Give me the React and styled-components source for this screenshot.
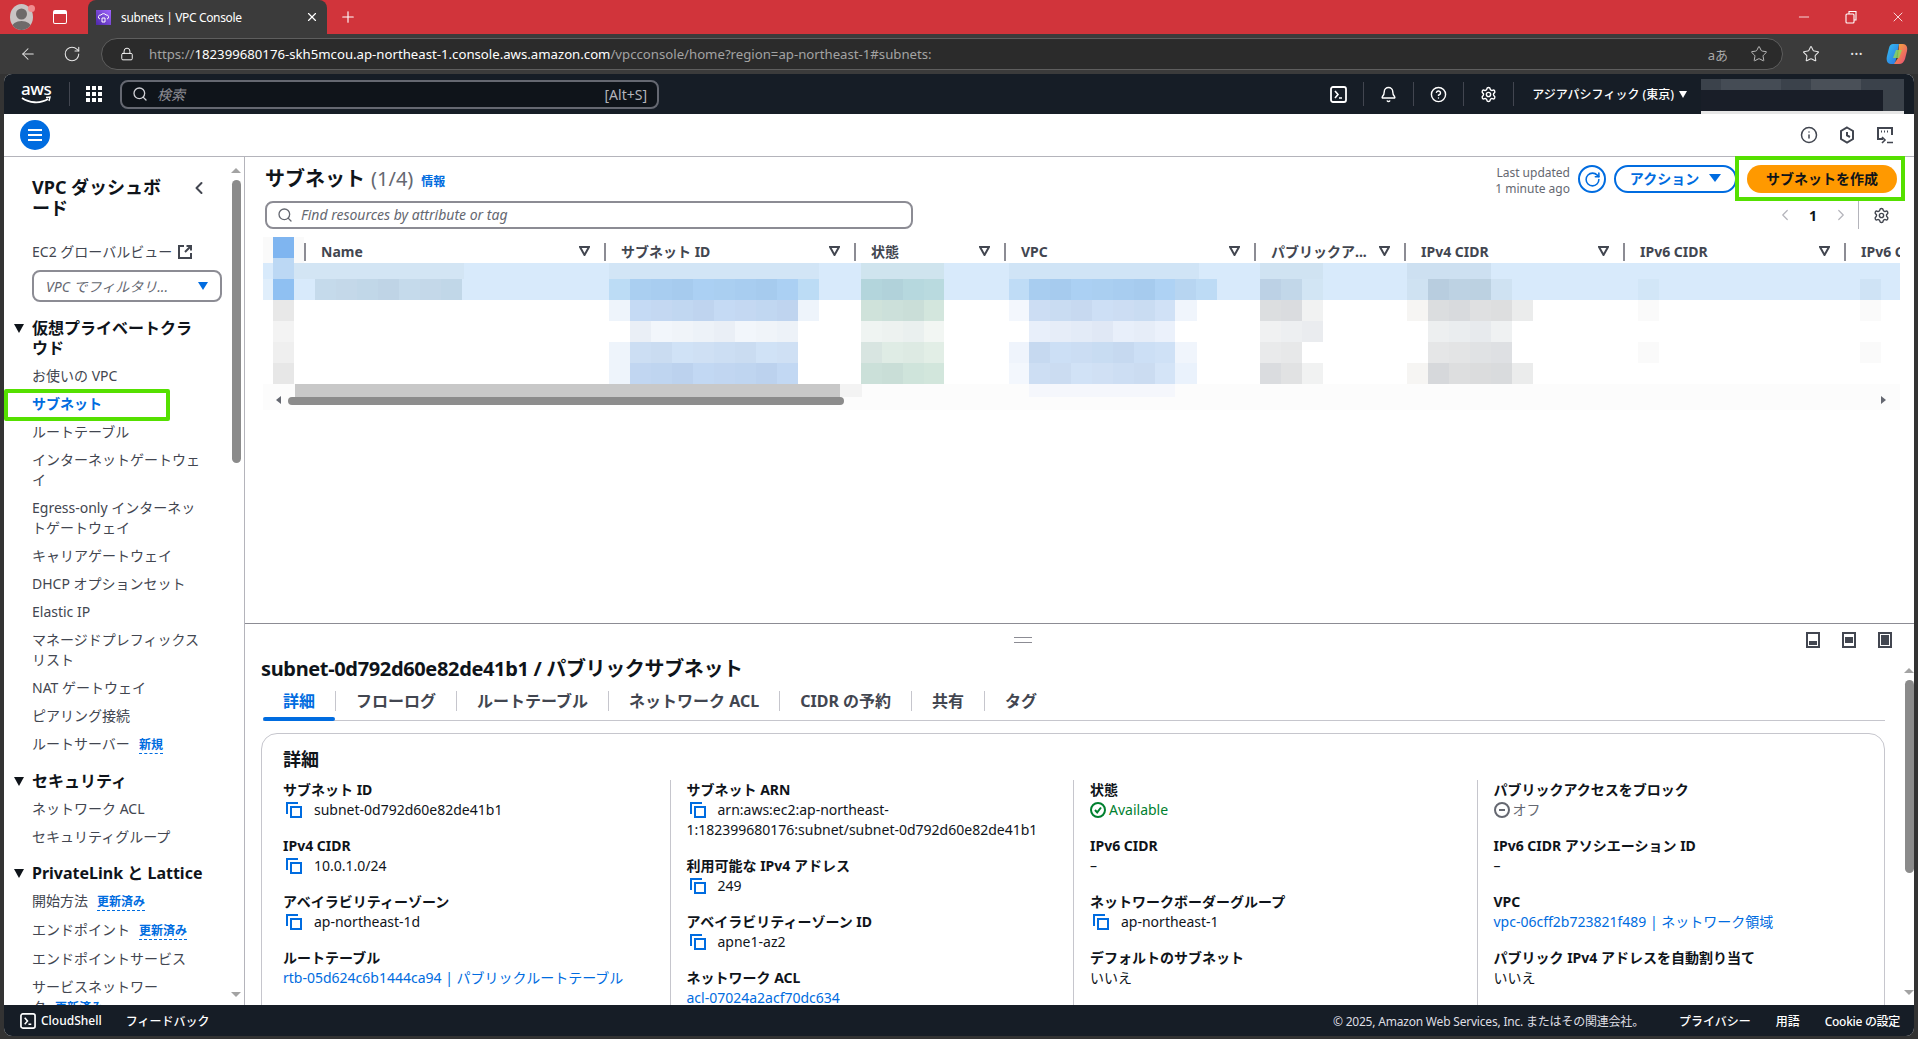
import styled, { createGlobalStyle } from "styled-components";
import { ArrowLeft, Bell, ChevronLeft, ChevronRight, CircleHelp, Info, Lock, Minus, Plus, RotateCw, Search, Settings, Star, X } from "lucide-react";

const sans = `"Noto Sans", "Noto Sans CJK JP", sans-serif`;
const blue = "#006ce0";
const ink = "#0f141a";
const gray = "#656871";
const navBg = "#161d26";

const GlobalStyle = createGlobalStyle`
  html, body { margin: 0; padding: 0; height: 100%; overflow: hidden; }
  body { font-family: ${sans}; background: #333; color: ${ink}; }
  * { box-sizing: border-box; }
`;

const Screen = styled.div`
  width: 1918px;
  height: 1039px;
  display: flex;
  flex-direction: column;
`;

/* browser chrome */
const TitleBar = styled.div`
  height: 34px;
  flex: none;
  background: #d1343b;
  display: flex;
  align-items: center;
  color: #fff;
  padding-left: 10px;
`;
const Avatar = styled.div`
  position: relative;
  width: 23px;
  height: 26px;
  border-radius: 50%;
  background: #c9c4c4;
  overflow: hidden;
  flex: none;
`;
const AvatarDot = styled.span`
  position: absolute;
  left: 18px;
  top: 1px;
  width: 7px;
  height: 7px;
  border-radius: 50%;
  background: #f08d90;
`;
const AvatarWrap = styled.div`
  position: relative;
  flex: none;
  width: 23px;
  height: 26px;
`;
const TabStrip = styled.div`
  width: 14px;
  height: 14px;
  margin-left: 20px;
  border: 1.5px solid #fff;
  border-top-width: 4px;
  border-radius: 2px;
  flex: none;
`;
const BrowserTab = styled.div`
  margin-left: 21px;
  width: 239px;
  height: 34px;
  background: #3b3b3b;
  border-radius: 8px 8px 0 0;
  display: flex;
  align-items: center;
  padding: 0 8px;
  font-size: 12px;
  flex: none;
`;
const TabTitle = styled.span`
  margin-left: 10px;
  flex: 1;
  letter-spacing: -0.35px;
`;
const NewTab = styled.div`
  margin-left: 12px;
  display: flex;
`;
const WindowButtons = styled.div`
  margin-left: auto;
  display: flex;
  gap: 31px;
  padding-right: 12px;
`;
const AddressBar = styled.div`
  height: 40px;
  flex: none;
  background: #3b3b3b;
  display: flex;
  align-items: center;
  color: #e6e6e6;
  padding-left: 19px;
`;
const ReloadBox = styled.div`
  margin-left: 26px;
  display: flex;
`;
const UrlPill = styled.div`
  margin-left: 20px;
  width: 1682px;
  height: 32px;
  flex: none;
  background: #2b2b2b;
  border: 1px solid #5e5e5e;
  border-radius: 16px;
  display: flex;
  align-items: center;
  padding: 0 14px 0 18px;
  font-size: 13.2px;
`;
const UrlText = styled.span`
  margin-left: 15px;
  color: #a3a3a3;
  white-space: nowrap;
  flex: 1;
  & b { font-weight: 400; color: #fff; }
`;
const ReadAloud = styled.span`
  color: #a9a9a9;
  font-size: 13px;
  margin-right: 22px;
`;
const BrowserTools = styled.div`
  display: flex;
  align-items: center;
  gap: 30px;
  margin-left: 19px;
`;
const MoreDots = styled.span`
  margin-right: -8px;
`;

/* page frame */
const PageFrame = styled.div`
  flex: 1;
  min-height: 0;
  margin: 0 4px 3px;
  background: #fff;
  border-radius: 8px;
  overflow: hidden;
  display: flex;
  flex-direction: column;
`;

/* aws top nav */
const TopNav = styled.div`
  height: 40px;
  flex: none;
  background: ${navBg};
  display: flex;
  align-items: center;
  color: #fff;
  position: relative;
`;
const LogoBox = styled.div`
  width: 51px;
  height: 24px;
  margin-left: 15px;
  border-right: 1px solid #424650;
  flex: none;
`;
const GridBox = styled.div`
  margin-left: 16px;
  display: grid;
  grid-template-columns: repeat(3, 4px);
  gap: 2px;
  flex: none;
`;
const GridDot = styled.span`
  width: 4px;
  height: 4px;
  background: #fff;
`;
const TopSearch = styled.div`
  margin-left: 18px;
  width: 539px;
  height: 29px;
  flex: none;
  background: #0f141a;
  border: 2px solid #656871;
  border-radius: 8px;
  display: flex;
  align-items: center;
  padding: 0 10px;
  color: #b4b4bb;
  font-size: 14px;
`;
const TopSearchHint = styled.span`
  margin-left: 9px;
  font-style: italic;
  color: #8c8c94;
  flex: 1;
`;
const ShortCut = styled.span`
  font-size: 14px;
  color: #b4b4bb;
`;
const NavTools = styled.div`
  margin-left: auto;
  display: flex;
  align-items: center;
  padding-right: 227px;
`;
const NavTool = styled.div`
  width: 50px;
  height: 24px;
  display: flex;
  align-items: center;
  justify-content: center;
  border-right: 1px solid #424650;
`;
const RegionLabel = styled.div`
  margin-left: 18px;
  font-size: 12px;
  font-weight: 500;
  white-space: nowrap;
  display: flex;
  align-items: center;
  gap: 5px;
`;
const DownMark = styled.span`
  width: 0;
  height: 0;
  border-left: ${(p) => p.$size}px solid transparent;
  border-right: ${(p) => p.$size}px solid transparent;
  border-top: ${(p) => p.$h}px solid ${(p) => p.$color};
  flex: none;
`;
const AccountMosaic = styled.svg`
  position: absolute;
  right: 10px;
  top: 5px;
`;

/* bar under nav */
const SubBar = styled.div`
  height: 43px;
  flex: none;
  border-bottom: 1px solid #b4b4bb;
  display: flex;
  align-items: center;
  padding: 0 20px 0 16px;
`;
const MenuButton = styled.div`
  width: 30px;
  height: 30px;
  border-radius: 50%;
  background: ${blue};
  display: flex;
  flex-direction: column;
  align-items: center;
  justify-content: center;
  gap: 3px;
`;
const MenuLine = styled.span`
  width: 14px;
  height: 2px;
  background: #fff;
`;
const SubTools = styled.div`
  margin-left: auto;
  display: flex;
  align-items: center;
  gap: 20px;
  color: #424650;
`;

const Body = styled.div`
  flex: 1;
  min-height: 0;
  display: flex;
`;

/* left navigation */
const Sidebar = styled.div`
  position: relative;
  width: 241px;
  flex: none;
  border-right: 1px solid #b4b4bb;
  overflow: hidden;
  padding: 20px 0 0 28px;
`;
const SideTitle = styled.div`
  width: 140px;
  font-size: 18px;
  font-weight: 700;
  line-height: 21px;
`;
const CollapseIcon = styled.div`
  position: absolute;
  left: 185px;
  top: 21px;
  color: #424650;
  display: flex;
`;
const NavText = styled.div`
  position: relative;
  width: 172px;
  font-size: 14px;
  line-height: 20px;
  padding: 4px 0;
  white-space: pre-line;
  color: ${(p) => (p.$active ? blue : "#424650")};
  font-weight: ${(p) => (p.$active ? 700 : 400)};
`;
const GlobalLink = styled(NavText)`
  margin-top: 19px;
  display: flex;
  align-items: center;
  gap: 6px;
  white-space: nowrap;
`;
const Filter = styled.div`
  margin-top: 4px;
  width: 190px;
  height: 32px;
  border: 2px solid #8c8c94;
  border-radius: 8px;
  display: flex;
  align-items: center;
  justify-content: space-between;
  padding: 0 12px;
  font-size: 14px;
  font-style: italic;
  color: ${gray};
  white-space: nowrap;
`;
const NavGroupTitle = styled.div`
  position: relative;
  width: 172px;
  margin-top: ${(p) => p.$top}px;
  margin-bottom: 4px;
  font-size: 16px;
  font-weight: 700;
  line-height: 20px;
`;
const GroupArrow = styled.span`
  position: absolute;
  left: -18px;
  top: 6px;
  display: flex;
`;
const NewBadge = styled.span`
  margin-left: 9px;
  font-size: 12px;
  font-weight: 700;
  color: ${blue};
  border-bottom: 1px dashed ${blue};
`;
const Highlight = styled.div`
  position: absolute;
  left: -28px;
  top: -1px;
  width: 166px;
  height: 32px;
  border: 4px solid #55e000;
  border-radius: 2px;
  pointer-events: none;
`;
const ScrollTrack = styled.div`
  position: absolute;
  right: ${(p) => p.$right}px;
  top: ${(p) => p.$top}px;
  width: 9px;
  height: ${(p) => p.$height}px;
  border-radius: 5px;
  background: #8b8b8b;
`;
const ScrollArrow = styled.div`
  position: absolute;
  right: ${(p) => p.$right}px;
  top: ${(p) => p.$top}px;
  width: 0;
  height: 0;
  border-left: 5px solid transparent;
  border-right: 5px solid transparent;
  ${(p) => (p.$up ? "border-bottom: 5px solid #a3a3a3;" : "border-top: 5px solid #a3a3a3;")}
`;

/* main */
const Main = styled.div`
  flex: 1;
  min-width: 0;
  display: flex;
  flex-direction: column;
`;
const ListPanel = styled.div`
  position: relative;
  height: 466px;
  flex: none;
  padding: 8px 0 0 20px;
`;
const ListHead = styled.div`
  height: 28px;
  display: flex;
  align-items: center;
  padding-right: 17px;
`;
const PageTitle = styled.h1`
  margin: 0;
  font-size: 20px;
  font-weight: 700;
  line-height: 28px;
  white-space: nowrap;
`;
const TitleCount = styled.span`
  font-weight: 400;
  color: ${gray};
  margin-left: 6px;
`;
const InfoLink = styled.a`
  margin-left: 8px;
  margin-top: 4px;
  font-size: 12px;
  font-weight: 700;
  color: ${blue};
`;
const LastUpdated = styled.div`
  margin-left: auto;
  margin-top: 4px;
  font-size: 12px;
  line-height: 16px;
  color: ${gray};
  text-align: right;
  white-space: nowrap;
`;
const RefreshButton = styled.div`
  margin-left: 8px;
  width: 28px;
  height: 28px;
  border-radius: 50%;
  border: 2px solid ${blue};
  color: ${blue};
  display: flex;
  align-items: center;
  justify-content: center;
`;
const ActionsButton = styled.div`
  margin-left: 8px;
  width: 123px;
  height: 28px;
  padding-bottom: 2px;
  border-radius: 20px;
  border: 2px solid ${blue};
  color: ${blue};
  font-size: 14px;
  font-weight: 700;
  display: flex;
  align-items: center;
  justify-content: center;
  gap: 10px;
`;
const CreateWrap = styled.div`
  position: relative;
  margin-left: 10px;
`;
const CreateButton = styled.div`
  width: 150px;
  height: 28px;
  padding-bottom: 2px;
  border-radius: 20px;
  background: #ff9900;
  font-size: 14px;
  font-weight: 700;
  display: flex;
  align-items: center;
  justify-content: center;
`;
const CreateHighlight = styled.div`
  position: absolute;
  left: -12px;
  top: -9px;
  width: 170px;
  height: 45px;
  border: 4px solid #55e000;
  pointer-events: none;
`;
const SearchRow = styled.div`
  margin-top: 8px;
  height: 28px;
  display: flex;
  align-items: center;
  padding-right: 24px;
`;
const ListSearch = styled.div`
  width: 648px;
  height: 28px;
  border: 2px solid #8c8c94;
  border-radius: 8px;
  display: flex;
  align-items: center;
  padding: 0 10px 1px;
  color: ${gray};
`;
const ListSearchHint = styled.span`
  margin-left: 8px;
  font-size: 14px;
  font-style: italic;
  color: ${gray};
`;
const Pager = styled.div`
  margin-left: auto;
  display: flex;
  align-items: center;
  color: #b4b4bb;
`;
const PageNumber = styled.span`
  width: 38px;
  text-align: center;
  font-size: 14px;
  font-weight: 700;
  color: ${ink};
`;
const PagerSettings = styled.div`
  margin-left: 8px;
  padding-left: 14px;
  height: 28px;
  border-left: 1px solid #b4b4bb;
  color: #424650;
  display: flex;
  align-items: center;
`;
const TableWrap = styled.div`
  position: relative;
  margin: 8px 0 0 -2px;
  width: 1637px;
  overflow: hidden;
`;
const HeadRow = styled.div`
  display: flex;
  height: 26px;
  padding-top: 6px;
`;
const HeadCell = styled.div`
  width: ${(p) => p.$width}px;
  flex: none;
  height: 18px;
  padding: 0 14px 2px 15px;
  border-left: ${(p) => (p.$plain ? "none" : "2px solid #8c8c94")};
  display: flex;
  align-items: center;
  justify-content: space-between;
  font-size: 14px;
  font-weight: 700;
  color: #424650;
  white-space: nowrap;
  overflow: hidden;
`;
const FilterMark = styled.svg`
  flex: none;
`;
const TableRow = styled.div`
  height: ${(p) => p.$height}px;
  background: ${(p) => (p.$selected ? "#d8eafb" : "#fff")};
`;
const MosaicLayer = styled.svg`
  position: absolute;
  left: 0;
  top: 0;
`;
const HScroll = styled.div`
  position: absolute;
  left: 25px;
  top: 160px;
  width: 556px;
  height: 8px;
  border-radius: 4px;
  background: #8b8b8b;
`;

/* split panel */
const SplitPanel = styled.div`
  position: relative;
  flex: 1;
  min-height: 0;
  border-top: 1px solid #8c8c94;
  overflow: hidden;
`;
const SplitTools = styled.div`
  height: 32px;
  display: flex;
  align-items: center;
  padding-right: 22px;
`;
const Handle = styled.div`
  margin-left: 769px;
  width: 18px;
  height: 6px;
  border-top: 1px solid #8c8c94;
  border-bottom: 1px solid #8c8c94;
`;
const LayoutIcons = styled.div`
  margin-left: auto;
  display: flex;
  gap: 22px;
`;
const SplitTitle = styled.h2`
  margin: 0 0 0 16px;
  font-size: 20px;
  font-weight: 700;
  line-height: 26px;
  white-space: nowrap;
  letter-spacing: -0.35px;
`;
const Tabs = styled.div`
  position: relative;
  margin: 9px 29px 0 18px;
  display: flex;
  padding-bottom: 9px;
  border-bottom: 1px solid #c6c6cd;
`;
const Tab = styled.div`
  position: relative;
  padding: 0 20px;
  font-size: 16px;
  font-weight: 700;
  line-height: 20px;
  white-space: nowrap;
  color: ${(p) => (p.$active ? blue : "#424650")};
  border-right: ${(p) => (p.$last ? "none" : "1px solid #c6c6cd")};
`;
const TabUnderline = styled.span`
  position: absolute;
  left: 0;
  right: 0;
  bottom: -10px;
  height: 4px;
  border-radius: 2px;
  background: ${blue};
`;
const Card = styled.div`
  margin: 12px 29px 0 16px;
  height: 340px;
  border: 1px solid #c6c6cd;
  border-radius: 16px;
  padding: 13px 0 0 4px;
`;
const CardTitle = styled.h3`
  margin: 0 0 0 17px;
  font-size: 18px;
  font-weight: 700;
  line-height: 24px;
`;
const DetailGrid = styled.div`
  margin-top: 9px;
  display: grid;
  grid-template-columns: repeat(4, 403.5px);
`;
const DetailColumn = styled.div`
  padding-left: 16px;
  height: 260px;
  border-left: ${(p) => (p.$first ? "1px solid transparent" : "1px solid #c6c6cd")};
`;
const Field = styled.div`
  margin-bottom: 16px;
  font-size: 14px;
  line-height: 20px;
`;
const FieldLabel = styled.div`
  font-weight: 700;
`;
const FieldValue = styled.div`
  color: ${(p) => p.$color || ink};
  width: 372px;
`;
const CopyMark = styled.svg`
  margin: 0 12px 0 3px;
  vertical-align: -3px;
`;
const StatusMark = styled.svg`
  margin-right: 3px;
  vertical-align: -3px;
`;
const LinkText = styled.a`
  color: ${blue};
`;

/* footer */
const Footer = styled.div`
  height: 31px;
  flex: none;
  background: ${navBg};
  display: flex;
  align-items: center;
  padding: 0 14px 0 16px;
  color: #fff;
  font-size: 12px;
`;
const FooterShell = styled.div`
  display: flex;
  align-items: center;
  gap: 5px;
  font-weight: 500;
`;
const FooterLink = styled.span`
  margin-left: ${(p) => p.$left}px;
  font-weight: 500;
  white-space: nowrap;
  letter-spacing: ${(p) => p.$tight || 0}px;
`;
const Copyright = styled.span`
  margin-left: auto;
  color: #dedee3;
  white-space: nowrap;
  letter-spacing: -0.2px;
`;

const AwsLogo = () => (
  <svg width="34" height="24" viewBox="0 0 34 24">
    <text x="2" y="13" fill="#fff" fontFamily={sans} fontSize="17" fontWeight="500" letterSpacing="-0.5">aws</text>
    <path d="M3 16c7 5 18 6 26 1" fill="none" stroke="#fff" strokeWidth="1.8" />
    <path d="M27 15.5l4 -.5 -1 4" fill="none" stroke="#fff" strokeWidth="1.4" />
  </svg>
);

const Favicon = () => (
  <svg width="15" height="15" viewBox="0 0 15 15">
    <defs>
      <linearGradient id="fav" x1="0" y1="1" x2="1" y2="0">
        <stop offset="0" stopColor="#4d27a8" />
        <stop offset="1" stopColor="#a166ff" />
      </linearGradient>
    </defs>
    <rect width="15" height="15" fill="url(#fav)" />
    <path d="M4 9a2 2 0 0 1 1-4 3 3 0 0 1 5 0 2 2 0 0 1 1 4M6 8h3v4H6z" fill="none" stroke="#fff" strokeWidth="1" />
  </svg>
);

const Copilot = () => (
  <svg width="24" height="24" viewBox="0 0 24 24">
    <defs>
      <linearGradient id="cpA" x1="0" y1="0" x2="1" y2="1">
        <stop offset="0" stopColor="#35c1f1" />
        <stop offset="1" stopColor="#2b6fe0" />
      </linearGradient>
      <linearGradient id="cpB" x1="0" y1="0" x2="1" y2="1">
        <stop offset="0" stopColor="#f7b733" />
        <stop offset="1" stopColor="#e8447a" />
      </linearGradient>
    </defs>
    <path d="M8 2h6l-4 20H6C2 22 1 18 2 14L4 6c.6-2.6 2-4 4-4z" fill="url(#cpA)" />
    <path d="M14 2h4c3 0 5 3 4 7l-2 8c-1 3-3 5-6 5h-5l4-6z" fill="url(#cpB)" />
    <path d="M11 8h6l-3 8H8z" fill="#8ed85a" opacity=".8" />
  </svg>
);

const ShellIcon = ({ size = 17 }) => (
  <svg width={size} height={size} viewBox="0 0 17 17">
    <rect x="1" y="1" width="15" height="15" rx="2" fill="none" stroke="#fff" strokeWidth="1.8" />
    <path d="M5 5l3 3.5L5 12M9 12h3" fill="none" stroke="#fff" strokeWidth="1.6" />
  </svg>
);

const HexClock = () => (
  <svg width="18" height="18" viewBox="0 0 18 18" fill="none" stroke="#424650" strokeWidth="2">
    <path d="M9 1.5l6 3.5v8l-6 3.5L3 13V5z" />
    <path d="M9 6v3.5l3 1.5" />
  </svg>
);

const MonitorTool = () => (
  <svg width="18" height="18" viewBox="0 0 18 18" fill="none" stroke="#424650" strokeWidth="2">
    <path d="M7 13H2V2h14v7" />
    <path d="M5 5.5h1M8 5.5h1M11 5.5h1" />
    <path d="M6 11l3 3-3 3M11 16.5h6" strokeWidth="1.6" />
  </svg>
);

const ExternalMark = () => (
  <svg width="14" height="14" viewBox="0 0 14 14" fill="none" stroke="#424650" strokeWidth="2">
    <path d="M6 1H1v12h12V8" />
    <path d="M7 7l6-6M8.5 1H13v4.5" />
  </svg>
);

const LayoutIcon = ({ y, h }) => (
  <svg width="14" height="16" viewBox="0 0 14 16">
    <rect x="1" y="1" width="12" height="14" fill="#fff" stroke="#424650" strokeWidth="2" />
    <rect x="3" y={y} width="8" height={h} fill="#424650" />
  </svg>
);

const CopyIcon = () => (
  <CopyMark width="16" height="16" viewBox="0 0 16 16" fill="none" stroke={blue} strokeWidth="2">
    <path d="M1 12V1h11" />
    <rect x="5" y="5" width="10" height="10" />
  </CopyMark>
);

const HeadFilter = () => (
  <FilterMark width="11" height="10" viewBox="0 0 11 10">
    <path d="M1 1h9L5.5 9z" fill="none" stroke="#424650" strokeWidth="2" />
  </FilterMark>
);

const columns = [
  { width: 41, plain: true },
  { width: 300, name: "Name" },
  { width: 250, name: "サブネット ID" },
  { width: 150, name: "状態" },
  { width: 250, name: "VPC" },
  { width: 150, name: "パブリックア..." },
  { width: 219, name: "IPv4 CIDR" },
  { width: 221, name: "IPv6 CIDR" },
  { width: 80, name: "IPv6 CIDR", clip: true },
];

// censored parts of the table, [x, y, w, h, colour] in page pixels
const mosaic = [
  [263, 237, 41, 26, "#fafafa"],
  [273, 237, 21, 21, "#7fb5f0"],
  [273, 258, 21, 21, "#bcd8f4"],
  [263, 279, 10, 21, "#e0eefb"],
  [273, 279, 21, 21, "#8fc0f2"],
  [273, 300, 21, 21, "#e8e8e8"],
  [273, 321, 21, 21, "#f3f3f3"],
  [273, 342, 21, 21, "#efefef"],
  [273, 363, 21, 21, "#e7e7e7"],
  [273, 384, 21, 13, "#f2f2f2"],
  [294, 263, 170, 16, "#d3e5f4"],
  [315, 279, 147, 21, "#c8dcec"],
  [609, 263, 210, 16, "#d2e5f6"],
  [609, 279, 21, 21, "#bcdcf5"],
  [630, 279, 168, 21, "#aed2f4"],
  [798, 279, 21, 21, "#bcdcf5"],
  [609, 300, 21, 21, "#eef4fb"],
  [630, 300, 168, 21, "#c8dcf5"],
  [798, 300, 21, 21, "#eef4fb"],
  [630, 321, 168, 21, "#f5f8fc"],
  [609, 342, 21, 21, "#eef4fb"],
  [630, 342, 168, 21, "#d3e4f7"],
  [609, 363, 21, 21, "#eef4fb"],
  [630, 363, 168, 21, "#c5daf4"],
  [861, 263, 83, 16, "#cfe4ee"],
  [861, 279, 83, 21, "#b9dadf"],
  [861, 300, 83, 21, "#d3e6dd"],
  [861, 321, 83, 21, "#f2f6f3"],
  [861, 342, 83, 21, "#e2eee6"],
  [861, 363, 83, 21, "#d2e6dc"],
  [1009, 263, 190, 16, "#d0e4f6"],
  [1009, 279, 20, 21, "#bfdcf6"],
  [1029, 279, 146, 21, "#aed2f4"],
  [1175, 279, 42, 21, "#bfdcf6"],
  [1009, 300, 20, 21, "#f3f7fd"],
  [1029, 300, 146, 21, "#d0e1f6"],
  [1175, 300, 22, 21, "#f0f5fc"],
  [1029, 321, 146, 21, "#ebf1fb"],
  [1009, 342, 20, 21, "#eff4fc"],
  [1029, 342, 146, 21, "#cfe1f6"],
  [1175, 342, 22, 21, "#f0f5fc"],
  [1009, 363, 20, 21, "#f3f7fd"],
  [1029, 363, 146, 21, "#d4e4f7"],
  [1175, 363, 22, 21, "#eaf2fc"],
  [1260, 263, 63, 16, "#d0e3f2"],
  [1260, 279, 42, 21, "#c5d9ea"],
  [1302, 279, 21, 21, "#d2e5f4"],
  [1260, 300, 42, 21, "#e4e4e4"],
  [1302, 300, 21, 21, "#f1f2f2"],
  [1260, 321, 63, 21, "#f5f5f5"],
  [1260, 342, 42, 21, "#ececec"],
  [1260, 363, 42, 21, "#e4e4e4"],
  [1302, 363, 21, 21, "#f1f2f2"],
  [1407, 263, 84, 16, "#cde0f1"],
  [1407, 279, 21, 21, "#cfe2f2"],
  [1428, 279, 63, 21, "#c0d4e4"],
  [1491, 279, 21, 21, "#cfe2f2"],
  [1407, 300, 21, 21, "#f6f5f3"],
  [1428, 300, 84, 21, "#e2e2e2"],
  [1512, 300, 21, 21, "#ebecec"],
  [1428, 321, 84, 21, "#f2f3f3"],
  [1428, 342, 84, 21, "#e8e8e8"],
  [1407, 363, 21, 21, "#f6f5f3"],
  [1428, 363, 84, 21, "#e0e0e0"],
  [1512, 363, 21, 21, "#ebecec"],
  [1638, 279, 21, 21, "#d2e6f7"],
  [1860, 279, 21, 21, "#cfe3f5"],
  [1638, 300, 21, 21, "#fafafa"],
  [1860, 300, 21, 21, "#fafafa"],
  [1638, 342, 21, 21, "#fafafa"],
  [1860, 342, 21, 21, "#fafafa"],
  [263, 384, 1637, 26, "#fcfcfc"],
  [295, 384, 545, 13, "#c8c8c8"],
  [840, 384, 22, 13, "#f3f3f3"],
  [1029, 384, 146, 13, "#f5f7fc"],
];

// the blur is made of 21px squares that each differ a little from the next
const mosaicGrain = mosaic
  .filter(([, , w, h]) => w >= 42 && h === 21)
  .flatMap(([x, y, w, h]) =>
    Array.from({ length: Math.floor(w / 21) }, (_, i) => [x + i * 21, y, 21, h, (((x + y) / 7 + i * 5) % 4) * 0.012]),
  );

const navGroups = [
  {
    title: "仮想プライベートクラウド",
    top: 16,
    items: [
      { text: "お使いの VPC" },
      { text: "サブネット", active: true },
      { text: "ルートテーブル" },
      { text: "インターネットゲートウェイ" },
      { text: "Egress-only インターネットゲートウェイ" },
      { text: "キャリアゲートウェイ" },
      { text: "DHCP オプションセット" },
      { text: "Elastic IP" },
      { text: "マネージドプレフィックスリスト" },
      { text: "NAT ゲートウェイ" },
      { text: "ピアリング接続" },
      { text: "ルートサーバー", badge: "新規" },
    ],
  },
  {
    title: "セキュリティ",
    top: 12,
    items: [{ text: "ネットワーク ACL" }, { text: "セキュリティグループ" }],
  },
  {
    title: "PrivateLink と Lattice",
    top: 12,
    items: [
      { text: "開始方法", badge: "更新済み" },
      { text: "エンドポイント", badge: "更新済み" },
      { text: "エンドポイントサービス" },
      { text: "サービスネットワー\nク", badge: "更新済み" },
    ],
  },
];

const detailColumns = [
  [
    { label: "サブネット ID", value: "subnet-0d792d60e82de41b1", copy: true },
    { label: "IPv4 CIDR", value: "10.0.1.0/24", copy: true },
    { label: "アベイラビリティーゾーン", value: "ap-northeast-1d", copy: true },
    { label: "ルートテーブル", link: "rtb-05d624c6b1444ca94 | パブリックルートテーブル" },
  ],
  [
    { label: "サブネット ARN", value: "arn:aws:ec2:ap-northeast-1:182399680176:subnet/subnet-0d792d60e82de41b1", copy: true },
    { label: "利用可能な IPv4 アドレス", value: "249", copy: true },
    { label: "アベイラビリティーゾーン ID", value: "apne1-az2", copy: true },
    { label: "ネットワーク ACL", link: "acl-07024a2acf70dc634" },
  ],
  [
    { label: "状態", status: "ok" },
    { label: "IPv6 CIDR", value: "–" },
    { label: "ネットワークボーダーグループ", value: "ap-northeast-1", copy: true },
    { label: "デフォルトのサブネット", value: "いいえ" },
  ],
  [
    { label: "パブリックアクセスをブロック", status: "off" },
    { label: "IPv6 CIDR アソシエーション ID", value: "–" },
    { label: "VPC", link: "vpc-06cff2b723821f489 | ネットワーク領域" },
    { label: "パブリック IPv4 アドレスを自動割り当て", value: "いいえ" },
  ],
];

const tabs = ["詳細", "フローログ", "ルートテーブル", "ネットワーク ACL", "CIDR の予約", "共有", "タグ"];

const FieldBody = ({ field }) => {
  if (field.link) {
    return <FieldValue><LinkText>{field.link}</LinkText></FieldValue>;
  }
  if (field.status === "ok") {
    return (
      <FieldValue $color="#00802f">
        <StatusMark width="16" height="16" viewBox="0 0 16 16" fill="none" stroke="#00802f" strokeWidth="2">
          <circle cx="8" cy="8" r="7" />
          <path d="M5 8l2.2 2.4L11 5.5" />
        </StatusMark>
        Available
      </FieldValue>
    );
  }
  if (field.status === "off") {
    return (
      <FieldValue $color={gray}>
        <StatusMark width="16" height="16" viewBox="0 0 16 16" fill="none" stroke={gray} strokeWidth="2">
          <circle cx="8" cy="8" r="7" />
          <path d="M5 8h6" />
        </StatusMark>
        オフ
      </FieldValue>
    );
  }
  return (
    <FieldValue>
      {field.copy && <CopyIcon />}
      {field.value}
    </FieldValue>
  );
};

const App = () => {
  return (
    <Screen>
      <GlobalStyle />
      <TitleBar>
        <AvatarWrap>
          <Avatar>
            <svg width="23" height="26" viewBox="0 0 23 26">
              <circle cx="11.5" cy="10" r="5.5" fill="#6e6a6a" />
              <ellipse cx="11.5" cy="24" rx="10" ry="7" fill="#6e6a6a" />
            </svg>
          </Avatar>
          <AvatarDot />
        </AvatarWrap>
        <TabStrip />
        <BrowserTab>
          <Favicon />
          <TabTitle>subnets | VPC Console</TabTitle>
          <X size={14} />
        </BrowserTab>
        <NewTab><Plus size={18} strokeWidth={1.5} /></NewTab>
        <WindowButtons>
          <Minus size={16} strokeWidth={1.2} />
          <svg width="16" height="16" viewBox="0 0 16 16" fill="none" stroke="#fff" strokeWidth="1.1">
            <rect x="3" y="5" width="8" height="9" rx="1" />
            <path d="M6 5V2.5h7V11h-2" />
          </svg>
          <X size={16} strokeWidth={1.2} />
        </WindowButtons>
      </TitleBar>
      <AddressBar>
        <ArrowLeft size={18} strokeWidth={1.4} />
        <ReloadBox><RotateCw size={18} strokeWidth={1.4} /></ReloadBox>
        <UrlPill>
          <Lock size={14} strokeWidth={1.6} color="#fff" />
          <UrlText>https://<b>182399680176-skh5mcou.ap-northeast-1.console.aws.amazon.com</b>/vpcconsole/home?region=ap-northeast-1#subnets:</UrlText>
          <ReadAloud>aあ</ReadAloud>
          <Star size={18} strokeWidth={1.3} color="#bdbdbd" />
        </UrlPill>
        <BrowserTools>
          <Star size={18} strokeWidth={1.4} />
          <MoreDots>···</MoreDots>
          <Copilot />
        </BrowserTools>
      </AddressBar>
      <PageFrame>
        <TopNav>
          <LogoBox><AwsLogo /></LogoBox>
          <GridBox>
            {Array.from({ length: 9 }).map((_, i) => <GridDot key={i} />)}
          </GridBox>
          <TopSearch>
            <Search size={16} strokeWidth={2} color="#d1d1d6" />
            <TopSearchHint>検索</TopSearchHint>
            <ShortCut>[Alt+S]</ShortCut>
          </TopSearch>
          <NavTools>
            <NavTool><ShellIcon /></NavTool>
            <NavTool><Bell size={17} strokeWidth={2} /></NavTool>
            <NavTool><CircleHelp size={17} strokeWidth={2} /></NavTool>
            <NavTool><Settings size={17} strokeWidth={2} /></NavTool>
            <RegionLabel>アジアパシフィック (東京) <DownMark $size={4} $h={7} $color="#fff" /></RegionLabel>
          </NavTools>
          <AccountMosaic width="203" height="35" viewBox="0 0 203 35">
            <rect width="203" height="11" fill="#3b424b" />
            <rect x="20" width="60" height="11" fill="#454c55" />
            <rect x="110" width="50" height="11" fill="#4a5058" />
            <rect y="11" width="203" height="21" fill="#191e28" />
            <rect x="182" y="11" width="21" height="21" fill="#3b424a" />
            <rect y="32" width="203" height="3" fill="#e6e6e6" />
          </AccountMosaic>
        </TopNav>
        <SubBar>
          <MenuButton>
            <MenuLine />
            <MenuLine />
            <MenuLine />
          </MenuButton>
          <SubTools>
            <Info size={18} strokeWidth={2} />
            <HexClock />
            <MonitorTool />
          </SubTools>
        </SubBar>
        <Body>
          <Sidebar>
            <SideTitle>VPC ダッシュボード</SideTitle>
            <CollapseIcon><ChevronLeft size={20} strokeWidth={2.4} /></CollapseIcon>
            <GlobalLink>EC2 グローバルビュー <ExternalMark /></GlobalLink>
            <Filter>VPC でフィルタリ... <DownMark $size={5} $h={8} $color={blue} /></Filter>
            {navGroups.map((group) => (
              <div key={group.title}>
                <NavGroupTitle $top={group.top}>
                  <GroupArrow><DownMark $size={5} $h={9} $color={ink} /></GroupArrow>
                  {group.title}
                </NavGroupTitle>
                {group.items.map((item) => (
                  <NavText key={item.text} $active={item.active}>
                    {item.text}
                    {item.badge && <NewBadge>{item.badge}</NewBadge>}
                    {item.active && <Highlight />}
                  </NavText>
                ))}
              </div>
            ))}
            <ScrollArrow $up $right={3} $top={11} />
            <ScrollTrack $right={3} $top={23} $height={283} />
            <ScrollArrow $right={3} $top={835} />
          </Sidebar>
          <Main>
            <ListPanel>
              <ListHead>
                <PageTitle>サブネット<TitleCount>(1/4)</TitleCount></PageTitle>
                <InfoLink>情報</InfoLink>
                <LastUpdated>Last updated<br />1 minute ago</LastUpdated>
                <RefreshButton><RotateCw size={17} strokeWidth={2.2} /></RefreshButton>
                <ActionsButton>アクション <DownMark $size={6} $h={8} $color={blue} /></ActionsButton>
                <CreateWrap>
                  <CreateButton>サブネットを作成</CreateButton>
                  <CreateHighlight />
                </CreateWrap>
              </ListHead>
              <SearchRow>
                <ListSearch>
                  <Search size={16} strokeWidth={2} />
                  <ListSearchHint>Find resources by attribute or tag</ListSearchHint>
                </ListSearch>
                <Pager>
                  <ChevronLeft size={18} strokeWidth={1.6} />
                  <PageNumber>1</PageNumber>
                  <ChevronRight size={18} strokeWidth={1.6} />
                  <PagerSettings><Settings size={17} strokeWidth={2} /></PagerSettings>
                </Pager>
              </SearchRow>
              <TableWrap>
                <HeadRow>
                  {columns.map((col, i) => (
                    <HeadCell key={i} $width={col.width} $plain={col.plain}>
                      {col.name}
                      {col.name && !col.clip && <HeadFilter />}
                    </HeadCell>
                  ))}
                </HeadRow>
                <TableRow $height={37} $selected />
                <TableRow $height={42} />
                <TableRow $height={42} />
                <TableRow $height={42} />
                <MosaicLayer width="1637" height="173" viewBox="263 237 1637 173">
                  {mosaic.map(([x, y, w, h, c], i) => (
                    <rect key={i} x={x} y={y} width={w} height={h} fill={c} />
                  ))}
                  {mosaicGrain.map(([x, y, w, h, o], i) => (
                    <rect key={i} x={x} y={y} width={w} height={h} fill="#1a4a8a" opacity={o} />
                  ))}
                  <path d="M281 396l-5 4 5 4zM1881 396l5 4-5 4z" fill="#656871" />
                </MosaicLayer>
                <HScroll />
              </TableWrap>
            </ListPanel>
            <SplitPanel>
              <SplitTools>
                <Handle />
                <LayoutIcons>
                  <LayoutIcon y={9} h={4} />
                  <LayoutIcon y={5} h={6} />
                  <LayoutIcon y={3} h={10} />
                </LayoutIcons>
              </SplitTools>
              <SplitTitle>subnet-0d792d60e82de41b1 / パブリックサブネット</SplitTitle>
              <Tabs>
                {tabs.map((tab, i) => (
                  <Tab key={tab} $active={i === 0} $last={i === tabs.length - 1}>
                    {tab}
                    {i === 0 && <TabUnderline />}
                  </Tab>
                ))}
              </Tabs>
              <Card>
                <CardTitle>詳細</CardTitle>
                <DetailGrid>
                  {detailColumns.map((col, i) => (
                    <DetailColumn key={i} $first={i === 0}>
                      {col.map((field) => (
                        <Field key={field.label}>
                          <FieldLabel>{field.label}</FieldLabel>
                          <FieldBody field={field} />
                        </Field>
                      ))}
                    </DetailColumn>
                  ))}
                </DetailGrid>
              </Card>
              <ScrollArrow $up $right={0} $top={44} />
              <ScrollTrack $right={0} $top={56} $height={193} />
              <ScrollArrow $right={0} $top={366} />
            </SplitPanel>
          </Main>
        </Body>
        <Footer>
          <FooterShell><ShellIcon size={16} />CloudShell</FooterShell>
          <FooterLink $left={24}>フィードバック</FooterLink>
          <Copyright>© 2025, Amazon Web Services, Inc. またはその関連会社。</Copyright>
          <FooterLink $left={35}>プライバシー</FooterLink>
          <FooterLink $left={25}>用語</FooterLink>
          <FooterLink $left={25} $tight={-0.3}>Cookie の設定</FooterLink>
        </Footer>
      </PageFrame>
    </Screen>
  );
};

export default App;
